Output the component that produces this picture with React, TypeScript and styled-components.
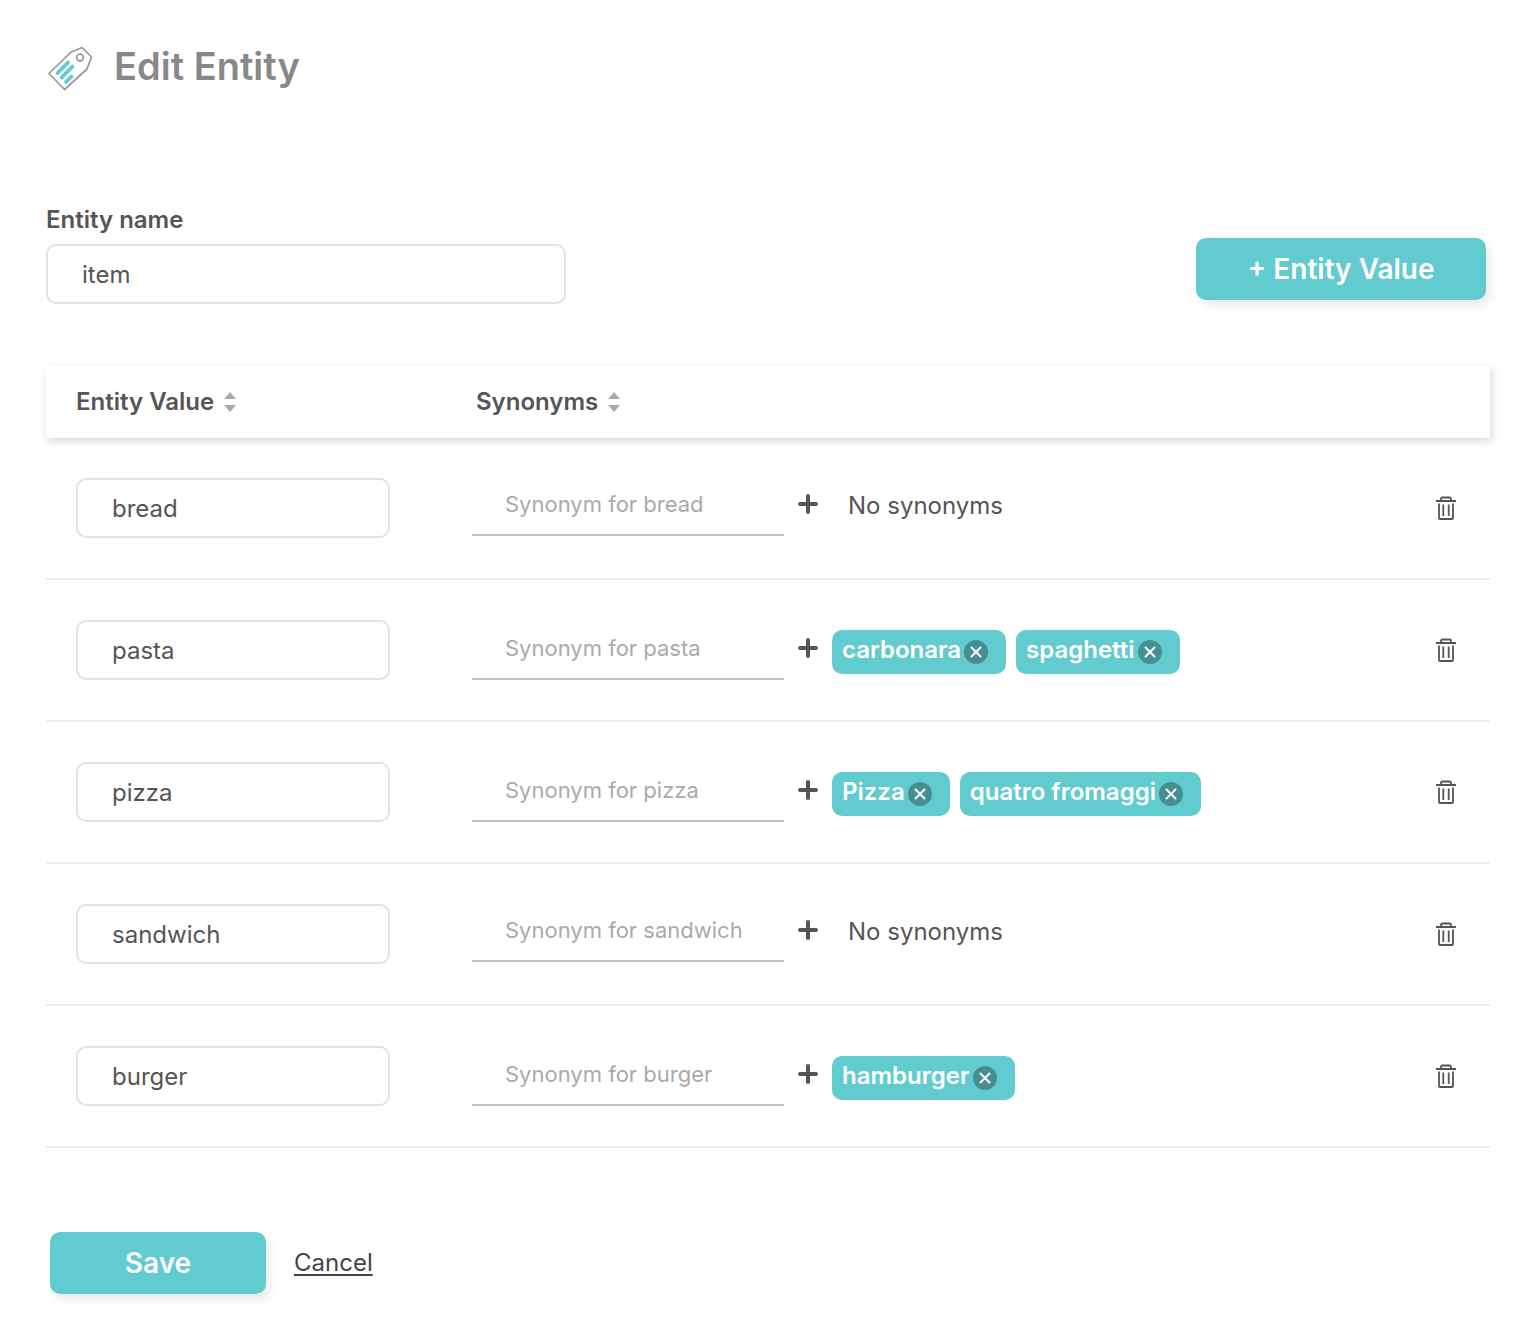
import React, { useState } from "react";
import styled, { createGlobalStyle } from "styled-components";

const teal = "#62cbcf";
const ink = "#555555";

const GlobalStyle = createGlobalStyle`
  *, *::before, *::after { box-sizing: border-box; }
  body {
    margin: 0;
    background: #ffffff;
    color: ${ink};
    font-family: Inter, "Liberation Sans", sans-serif;
    font-size: 24px;
    line-height: 32px;
  }
  button, input { font: inherit; color: inherit; }
  button { cursor: pointer; }
`;

const Page = styled.main`
  padding: 44px 36px 36px 46px;
`;

const Title = styled.header`
  display: flex;
  align-items: flex-start;
  gap: 20px;
  height: 48px;
  margin-bottom: 112px;
  h1 {
    margin: 0;
    color: #888888;
    font-size: 38px;
    font-weight: 600;
    line-height: 44px;
  }
`;

const Toolbar = styled.section`
  display: flex;
  justify-content: space-between;
  align-items: flex-end;
  padding-right: 4px;
  margin-bottom: 62px;
`;

const Field = styled.div`
  display: flex;
  flex-direction: column;
  gap: 8px;
  width: 520px;
  label { font-weight: 600; }
`;

const TextInput = styled.input`
  display: block;
  width: 100%;
  height: 60px;
  padding: 0 34px;
  border: 2px solid #dde3e9;
  border-radius: 10px;
  background: #ffffff;
  outline: none;
`;

const PrimaryButton = styled.button<{ $width: number }>`
  width: ${(p) => p.$width}px;
  height: 62px;
  padding: 0;
  border: 0;
  border-radius: 10px;
  background: ${teal};
  box-shadow: 4px 6px 8px rgba(0, 0, 0, 0.08);
  color: #ffffff;
  font-size: 28px;
  font-weight: 600;
`;

const AddAction = styled.div`
  padding-bottom: 4px;
`;

const Table = styled.table`
  width: 100%;
  table-layout: fixed;
  border-collapse: separate;
  border-spacing: 0;
  thead {
    box-shadow: 2px 3px 8px rgba(0, 0, 0, 0.16);
  }
  th {
    height: 72px;
    padding: 0 30px;
    text-align: left;
    font-weight: 600;
  }
  td {
    height: 142px;
    padding: 0 26px;
    border-bottom: 2px solid #eeeeee;
    vertical-align: middle;
  }
  td:first-child { padding: 0 56px 0 30px; }
  td:last-child { padding: 0 32px; }
`;

const ValueColumn = styled.col`
  width: 400px;
`;

const ActionColumn = styled.col`
  width: 96px;
`;

const SortButton = styled.button`
  display: flex;
  align-items: center;
  gap: 10px;
  padding: 0;
  border: 0;
  background: none;
`;

const SynonymLine = styled.div<{ $empty: boolean }>`
  display: flex;
  align-items: flex-start;
  padding-bottom: ${(p) => (p.$empty ? 4 : 0)}px;
`;

const SynonymInput = styled.input`
  flex: 0 0 312px;
  width: 312px;
  height: 60px;
  padding: 0 33px 2px;
  border: 0;
  border-bottom: 2px solid #c0c0c0;
  background: none;
  outline: none;
  font-size: 22px;
  &::placeholder { color: #aaaaaa; opacity: 1; }
`;

const AddButton = styled.button`
  display: flex;
  align-items: center;
  justify-content: center;
  width: 48px;
  height: 56px;
  padding: 0;
  border: 0;
  background: none;
`;

const NoSynonyms = styled.span`
  padding-left: 16px;
  line-height: 60px;
`;

const Tags = styled.ul`
  display: flex;
  flex-wrap: wrap;
  gap: 10px;
  margin: 0;
  padding: 10px 0 0;
  list-style: none;
`;

const Tag = styled.li`
  display: flex;
  align-items: flex-start;
  gap: 3px;
  height: 44px;
  padding: 0 18px 0 10px;
  border-radius: 10px;
  background: ${teal};
  color: #ffffff;
  font-weight: 600;
  line-height: 40px;
`;

const RemoveButton = styled.button`
  display: flex;
  align-items: center;
  justify-content: center;
  width: 24px;
  height: 24px;
  margin-top: 10px;
  padding: 0;
  border: 0;
  border-radius: 50%;
  background: #458e91;
`;

const DeleteButton = styled.button`
  display: block;
  margin-left: auto;
  padding: 0;
  border: 0;
  background: none;
  svg { display: block; }
`;

const Footer = styled.footer`
  display: flex;
  align-items: center;
  gap: 28px;
  margin-top: 84px;
  padding-left: 4px;
  a { color: #444444; text-underline-offset: 3px; text-decoration-thickness: 2px; }
`;

const TagIcon = () => (
  <svg width="48" height="48" viewBox="0 0 48 48" fill="none" aria-hidden="true">
    <path d="M3 29.500 24.500 8.500 36 3.500 45.500 13 41 25 18.500 45.500Z" stroke="#999999" strokeWidth="1.700" strokeLinejoin="round" />
    <circle cx="34" cy="13.500" r="3.300" stroke="#999999" strokeWidth="1.700" />
    <path d="M11.500 29 22 18.500M15.500 33.500 26.500 22.500M20 38 25.500 32.500" stroke={teal} strokeWidth="3.800" strokeLinecap="round" />
  </svg>
);

const SortIcon = () => (
  <svg width="12" height="22" viewBox="0 0 12 22" fill="#aaaaaa" aria-hidden="true">
    <path d="M6 1 12 8H0ZM0 14H12L6 21Z" />
  </svg>
);

const PlusIcon = () => (
  <svg width="20" height="20" viewBox="0 0 20 20" aria-hidden="true">
    <path d="M10 2V18M2 10H18" stroke={ink} strokeWidth="4" strokeLinecap="round" />
  </svg>
);

const CloseIcon = () => (
  <svg width="12" height="12" viewBox="0 0 12 12" aria-hidden="true">
    <path d="M1.500 1.500 10.500 10.500M10.500 1.500 1.500 10.500" stroke="#ffffff" strokeWidth="2" strokeLinecap="round" />
  </svg>
);

const TrashIcon = () => (
  <svg width="24" height="24" viewBox="0 0 24 24" fill="none" stroke={ink} strokeWidth="1.800" aria-hidden="true">
    <path d="M2 5H22M7 5V3Q7 1.500 8.500 1.500H15.500Q17 1.500 17 3V5M5 7.500V22Q5 23 6 23H18Q19 23 19 22V7.500M9.300 8.500V20M14.700 8.500V20" />
  </svg>
);

interface Entity {
  value: string;
  synonyms: string[];
}

const initialEntities: Entity[] = [
  { value: "bread", synonyms: [] },
  { value: "pasta", synonyms: ["carbonara", "spaghetti"] },
  { value: "pizza", synonyms: ["Pizza", "quatro fromaggi"] },
  { value: "sandwich", synonyms: [] },
  { value: "burger", synonyms: ["hamburger"] },
];

export default function App() {
  const [entities, setEntities] = useState(initialEntities);

  const removeSynonym = (row: number, synonym: string) =>
    setEntities((list) =>
      list.map((e, i) => (i === row ? { ...e, synonyms: e.synonyms.filter((s) => s !== synonym) } : e)),
    );

  return (
    <>
      <GlobalStyle />
      <Page>
        <Title>
          <TagIcon />
          <h1>Edit Entity</h1>
        </Title>
        <Toolbar>
          <Field>
            <label htmlFor="entity-name">Entity name</label>
            <TextInput id="entity-name" defaultValue="item" />
          </Field>
          <AddAction>
            <PrimaryButton type="button" $width={290}>+ Entity Value</PrimaryButton>
          </AddAction>
        </Toolbar>
        <Table>
          <colgroup>
            <ValueColumn />
            <col />
            <ActionColumn />
          </colgroup>
          <thead>
            <tr>
              <th scope="col"><SortButton type="button">Entity Value <SortIcon /></SortButton></th>
              <th scope="col"><SortButton type="button">Synonyms <SortIcon /></SortButton></th>
              <th aria-label="Actions" />
            </tr>
          </thead>
          <tbody>
            {entities.map((entity, row) => (
              <tr key={entity.value}>
                <td><TextInput aria-label="Entity value" defaultValue={entity.value} /></td>
                <td>
                  <SynonymLine $empty={entity.synonyms.length === 0}>
                    <SynonymInput
                      aria-label={`Synonym for ${entity.value}`}
                      placeholder={`Synonym for ${entity.value}`}
                    />
                    <AddButton type="button" aria-label="Add synonym"><PlusIcon /></AddButton>
                    {entity.synonyms.length === 0 ? (
                      <NoSynonyms>No synonyms</NoSynonyms>
                    ) : (
                      <Tags>
                        {entity.synonyms.map((synonym) => (
                          <Tag key={synonym}>
                            {synonym}
                            <RemoveButton
                              type="button"
                              aria-label={`Remove ${synonym}`}
                              onClick={() => removeSynonym(row, synonym)}
                            >
                              <CloseIcon />
                            </RemoveButton>
                          </Tag>
                        ))}
                      </Tags>
                    )}
                  </SynonymLine>
                </td>
                <td>
                  <DeleteButton
                    type="button"
                    aria-label={`Delete ${entity.value}`}
                    onClick={() => setEntities((list) => list.filter((_, i) => i !== row))}
                  >
                    <TrashIcon />
                  </DeleteButton>
                </td>
              </tr>
            ))}
          </tbody>
        </Table>
        <Footer>
          <PrimaryButton type="submit" $width={216}>Save</PrimaryButton>
          <a href="#cancel">Cancel</a>
        </Footer>
      </Page>
    </>
  );
}
